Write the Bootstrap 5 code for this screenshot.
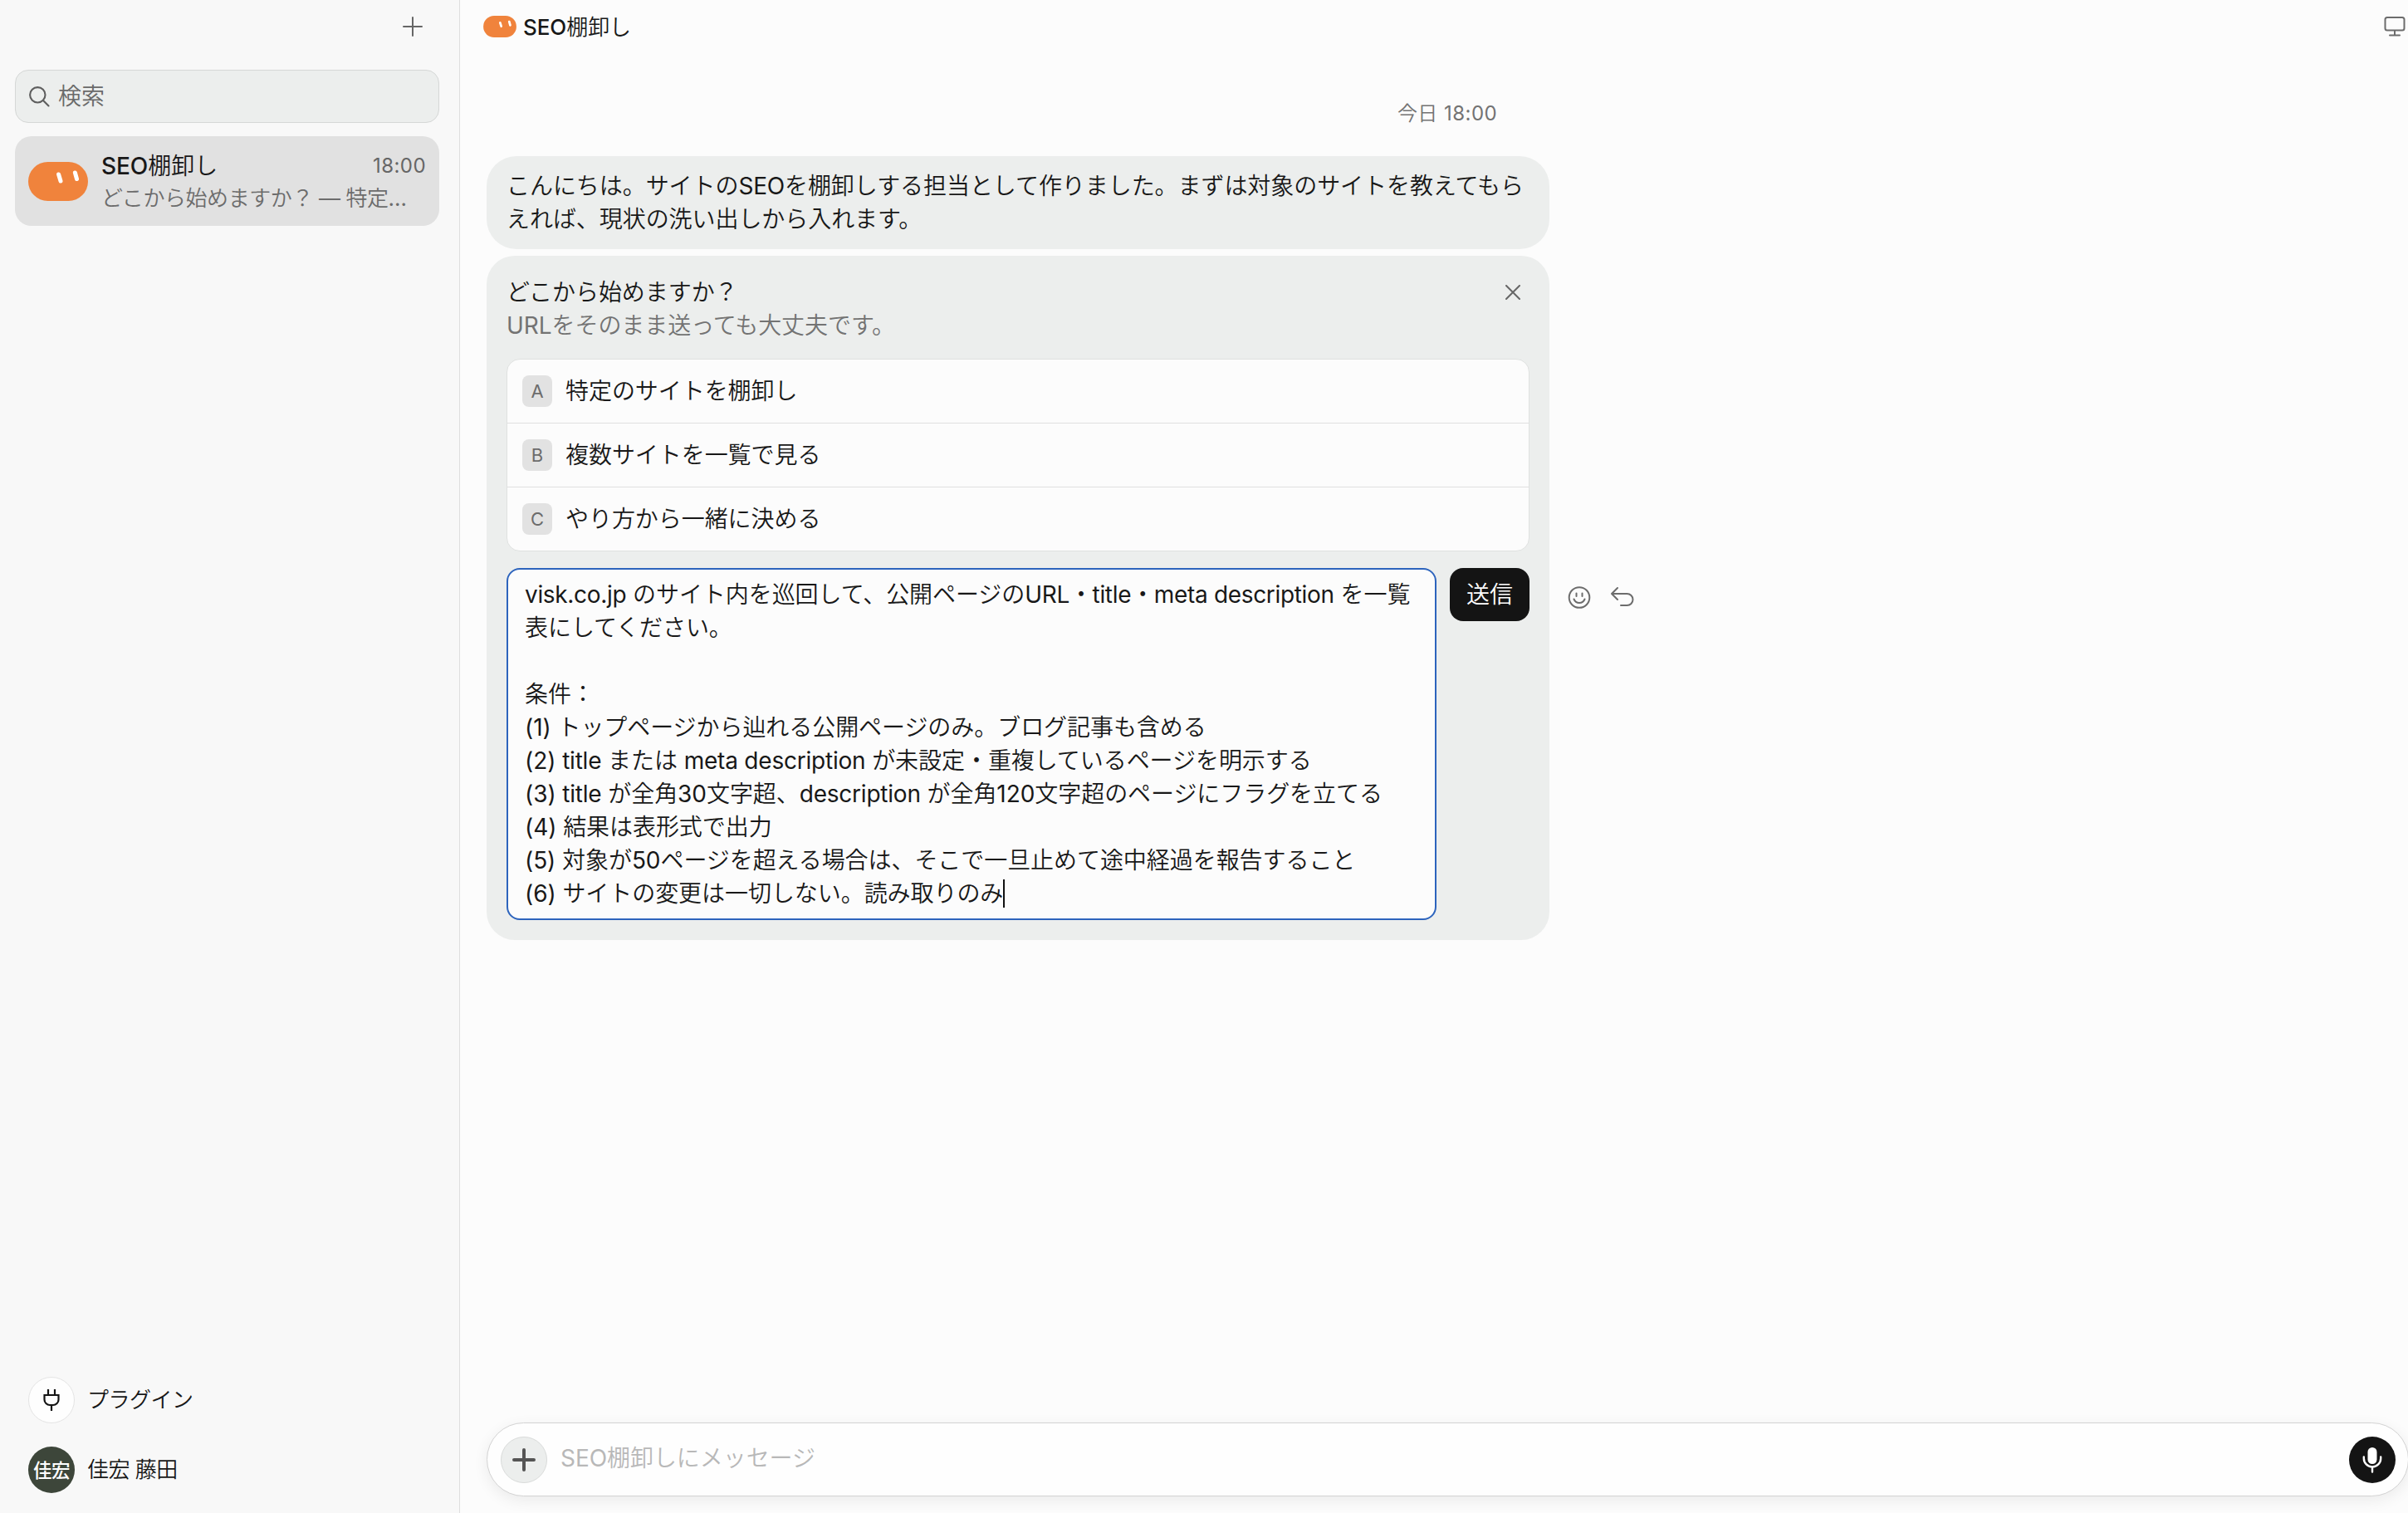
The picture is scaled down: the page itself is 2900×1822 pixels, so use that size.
<!DOCTYPE html>
<html lang="ja">
<head>
<meta charset="utf-8">
<title>SEO棚卸し</title>
<link rel="stylesheet" href="https://cdn.jsdelivr.net/npm/bootstrap@5.3.0/dist/css/bootstrap.min.css">
<style>
body{width:2900px;height:1822px;background:#fcfcfc;color:#181818;font:400 28px/40px Inter,"Noto Sans CJK JP DemiLight","Noto Sans CJK JP",sans-serif;letter-spacing:-.06px;overflow:hidden}
.latin{letter-spacing:-.22px}
.tight{letter-spacing:-.33px}
.muted{color:#737373}
.side{width:554px;background:#f8f8f8;border-right:1px solid #dedede;padding:0 24px 24px 18px}
.side-top{height:84px;padding:20px 20px 0 0}
.search{height:64px;border:1px solid #d5d7d6;border-radius:16px;background:#eceeed;padding:0 0 0 16px;gap:10px;color:#6a6a6a}
.chat{height:108px;margin-top:16px;border-radius:20px;background:#e1e1e1;padding:0 16px;gap:16px}
.chat-title{font-weight:500;line-height:38px}
.jp{font-family:"Noto Sans CJK JP DemiLight","Noto Sans CJK JP",sans-serif;font-weight:400}
.preview{font-size:26px;line-height:38px;color:#6c6c6c;letter-spacing:-.42px;padding-top:1px}
.stamp{font-size:24px;letter-spacing:.45px;color:#737373}
.chat .stamp{padding-top:3px;line-height:36px;color:#666}
.foot{padding-left:16px;gap:28px;font-size:26px;letter-spacing:-.5px}
.foot-row{gap:15px}
.disc{width:56px;height:56px}
.plug{background:#fefefe;border:1px solid #e4e4e4}
.user{background:#3d463a;color:#fff;font:500 22.500px/1 "Noto Sans CJK JP",sans-serif;padding-bottom:2px}
.head{height:64px;padding:0 3px 0 28px;gap:8px}
.head-title{font-size:26px;font-weight:500}
.thread{padding:0 0 0 32px}
.day{padding-top:53px;height:124px;line-height:40px}
.bubble{width:1280px;background:#eceeed;border-radius:36px;padding:16px 24px;white-space:nowrap}
.ask{width:1280px;background:#eceeed;border-radius:34px;padding:24px;margin-top:8px}
.dismiss{margin:11px 11px 0 0}
.opts{margin:20px 0;border:1px solid #dfe1e0;border-radius:16px;overflow:hidden;background:#fcfcfc}
.opt{height:77px;border-bottom:1px solid #e0e0e0;padding-left:18px;gap:16px}
.opt:last-child{border-bottom:0;height:76px}
.key{width:36px;height:38px;border-radius:8px;background:#e2e2e2;color:#6c6c6c;font-size:22px;line-height:38px}
.reply{width:1120px;height:424px;border:2px solid #2d64bd;border-radius:16px;background:#fcfcfc;padding:10px 20px;white-space:nowrap}
.caret{display:inline-block;width:2px;height:34px;background:#111;vertical-align:-7px;margin-right:-2px}
.send,.send:hover{width:96px;height:64px;border-radius:16px;background:#141414;color:#fff;font-size:28px;line-height:40px;padding:0}
.acts{padding:406px 0 0 22px;gap:24px}
.composer{height:89px;margin:0 -1px 20px 32px;border:1px solid #d3d3d3;border-radius:45px;background:#fefefe;box-shadow:0 5px 18px rgba(0,0,0,.07);padding:0 15px 0 16px;gap:16px;color:#b8b8b8}
.add{background:#eceeed;border:1px solid #d9dbda}
.mic{background:#141414}
svg{display:block;flex:none}
</style>
</head>
<body class="d-flex">
<svg width="0" height="0" class="position-absolute"><defs>
<symbol id="face" viewBox="0 0 72 47"><rect width="72" height="47" rx="23.5" fill="#f0833c"/><path d="M36.600 15l2.400 8M56.400 13l2.100 7.500" stroke="#fff" stroke-width="5" stroke-linecap="round"/></symbol>
</defs></svg>

<aside class="side d-flex flex-column flex-shrink-0">
  <div class="side-top d-flex justify-content-end">
    <svg width="24" height="24" fill="none" stroke="#666" stroke-width="2" stroke-linecap="round"><path d="M12 1v22M1 12h22"/></svg>
  </div>
  <div class="search d-flex align-items-center">
    <svg width="25" height="25" fill="none" stroke="#5e5e5e" stroke-width="2.100" stroke-linecap="round"><circle cx="10.300" cy="10.300" r="9.200"/><path d="M17 17l6.500 6.500"/></svg>
    <span>検索</span>
  </div>
  <div class="chat d-flex align-items-center">
    <svg width="72" height="47"><use href="#face"/></svg>
    <div class="flex-grow-1">
      <div class="d-flex justify-content-between chat-title"><span>SEO<span class="jp">棚卸し</span></span><span class="stamp fw-normal">18:00</span></div>
      <div class="preview">どこから始めますか？ — 特定…</div>
    </div>
  </div>
  <div class="foot d-flex flex-column mt-auto">
    <div class="foot-row d-flex align-items-center">
      <span class="disc plug rounded-circle d-flex align-items-center justify-content-center">
        <svg width="20" height="28" fill="none" stroke="#141414" stroke-width="2.200"><path d="M6 1v7M14 1v7M1.500 8h17v5.500a6.500 6.500 0 0 1-6.500 6.500H8a6.500 6.500 0 0 1-6.500-6.500zM10 20v7"/></svg>
      </span><span>プラグイン</span>
    </div>
    <div class="foot-row d-flex align-items-center">
      <span class="disc user rounded-circle d-flex align-items-center justify-content-center">佳宏</span><span>佳宏 藤田</span>
    </div>
  </div>
</aside>

<main class="d-flex flex-column flex-grow-1">
  <header class="head d-flex align-items-center">
    <svg width="40" height="26"><use href="#face"/></svg>
    <span class="head-title flex-grow-1">SEO<span class="jp">棚卸し</span></span>
    <svg width="26" height="26" fill="none" stroke="#6c6c6c" stroke-width="2" stroke-linecap="round"><rect x="1.500" y="2" width="23" height="15.500" rx="2.500"/><path d="M13 18v5M7 23.500h12"/></svg>
  </header>
  <section class="thread flex-grow-1">
    <div class="day stamp text-center">今日 18:00</div>
    <div class="bubble">こんにちは。サイトの<span class="latin">SEO</span>を棚卸しする担当として作りました。まずは対象のサイトを教えてもら<br>えれば、現状の洗い出しから入れます。</div>
    <div class="d-flex">
      <div class="ask">
        <div class="d-flex justify-content-between">
          <div>
            <div>どこから始めますか？</div>
            <div class="muted">URLをそのまま送っても大丈夫です。</div>
          </div>
          <svg class="dismiss" width="18" height="18" fill="none" stroke="#666" stroke-width="2" stroke-linecap="round"><path d="M1 1l16 16M17 1L1 17"/></svg>
        </div>
        <div class="opts">
          <div class="opt d-flex align-items-center"><span class="key text-center">A</span><span>特定のサイトを棚卸し</span></div>
          <div class="opt d-flex align-items-center"><span class="key text-center">B</span><span>複数サイトを一覧で見る</span></div>
          <div class="opt d-flex align-items-center"><span class="key text-center">C</span><span>やり方から一緒に決める</span></div>
        </div>
        <div class="d-flex justify-content-between align-items-start">
          <div class="reply">
            <div><span class="tight">visk.co.jp</span> のサイト内を巡回して、公開ページの<span class="tight">URL・title・meta description</span> を一覧</div>
            <div>表にしてください。</div>
            <div>&nbsp;</div>
            <div>条件：</div>
            <div>(1) トップページから辿れる公開ページのみ。ブログ記事も含める</div>
            <div>(2) <span class="latin">title</span> または <span class="latin">meta description</span> が未設定・重複しているページを明示する</div>
            <div>(3) <span class="latin">title</span> が全角30文字超、<span class="latin">description</span> が全角120文字超のページにフラグを立てる</div>
            <div>(4) 結果は表形式で出力</div>
            <div>(5) 対象が50ページを超える場合は、そこで一旦止めて途中経過を報告すること</div>
            <div>(6) サイトの変更は一切しない。読み取りのみ<span class="caret"></span></div>
          </div>
          <button class="btn send" type="button">送信</button>
        </div>
      </div>
      <div class="acts d-flex">
        <svg width="28" height="28" fill="none" stroke="#6c6c6c" stroke-width="2" stroke-linecap="round"><circle cx="14" cy="13.500" r="12.300"/><path d="M10.500 8.500v3.500M17.500 8.500v3.500M7.500 15.500c1.300 3.200 3.500 4.500 6.500 4.500s5.200-1.300 6.500-4.500"/></svg>
        <svg width="28" height="28" fill="none" stroke="#6c6c6c" stroke-width="2" stroke-linecap="round" stroke-linejoin="round"><path d="M8 2L1 9l7 7M1 9h18.500a7 7 0 0 1 0 14H12"/></svg>
      </div>
    </div>
  </section>
  <footer class="composer d-flex align-items-center">
    <span class="disc add rounded-circle d-flex align-items-center justify-content-center"><svg width="28" height="28" stroke="#555" stroke-width="4" stroke-linecap="round"><path d="M14 2v24M2 14h24"/></svg></span>
    <span class="flex-grow-1 pb-1">SEO棚卸しにメッセージ</span>
    <span class="disc mic rounded-circle d-flex align-items-center justify-content-center"><svg width="24" height="32" fill="none" stroke="#fff" stroke-width="2.400" stroke-linecap="round"><rect x="6.500" y="1" width="11" height="20" rx="5.500" fill="#fff" stroke="none"/><path d="M1.800 12.500v1.700a10.200 10.200 0 0 0 20.400 0v-1.700M12 24.500v6"/></svg></span>
  </footer>
</main>
<script src="https://cdn.jsdelivr.net/npm/bootstrap@5.3.0/dist/js/bootstrap.bundle.min.js"></script>
</body>
</html>
